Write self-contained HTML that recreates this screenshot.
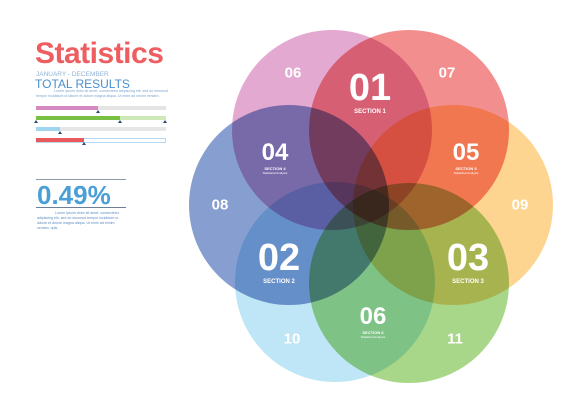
<!DOCTYPE html>
<html><head><style>
body{margin:0;width:588px;height:415px;background:#fff;position:relative;overflow:hidden;font-family:"Liberation Sans",sans-serif}
.c{position:absolute;width:200px;height:200px;border-radius:50%;mix-blend-mode:multiply}
.t{position:absolute;color:#fff;font-weight:bold;text-align:center;transform:translate(-50%,-50%);white-space:nowrap;line-height:1}
.s{font-size:6px;display:block;margin-top:2px}
.ss{font-size:3px;display:block;font-weight:normal;margin-top:1px}
.a{position:absolute}
.bar{position:absolute;height:4px;left:36px}
.tiny{position:absolute;font-size:3.6px;color:#7aa5cf;line-height:5px}
.tri{position:absolute;width:0;height:0;border-left:2px solid transparent;border-right:2px solid transparent;border-bottom:3px solid #2b4a6e}
</style></head><body>
<div class="c" style="left:232px;top:30px;background:#e3a9d0"></div>
<div class="c" style="left:309px;top:30px;background:#f28f8e"></div>
<div class="c" style="left:189px;top:105px;background:#879fd0"></div>
<div class="c" style="left:353px;top:105px;background:#fed590"></div>
<div class="c" style="left:235px;top:182px;background:#bfe6f6"></div>
<div class="c" style="left:309px;top:183px;background:#a8d78a"></div>

<div class="t" style="left:370px;top:92px;font-size:38px">01<span class="s">SECTION 1</span></div>
<div class="t" style="left:275px;top:158px;font-size:24px">04<span class="s" style="font-size:4px">SECTION 4</span><span class="ss">Statistical Analysis</span></div>
<div class="t" style="left:466px;top:158px;font-size:24px">05<span class="s" style="font-size:4px">SECTION 5</span><span class="ss">Statistical Analysis</span></div>
<div class="t" style="left:279px;top:262px;font-size:38px">02<span class="s">SECTION 2</span></div>
<div class="t" style="left:468px;top:262px;font-size:38px">03<span class="s">SECTION 3</span></div>
<div class="t" style="left:373px;top:322px;font-size:24px">06<span class="s" style="font-size:4px">SECTION 6</span><span class="ss">Statistical Analysis</span></div>
<div class="t" style="left:293px;top:73px;font-size:15px">06</div>
<div class="t" style="left:447px;top:73px;font-size:15px">07</div>
<div class="t" style="left:220px;top:205px;font-size:15px">08</div>
<div class="t" style="left:520px;top:205px;font-size:15px">09</div>
<div class="t" style="left:292px;top:339px;font-size:15px">10</div>
<div class="t" style="left:455px;top:339px;font-size:15px">11</div>

<div class="a" style="left:35px;top:39px;font-size:30px;font-weight:bold;color:#ee5d60;letter-spacing:-0.5px;line-height:1">Statistics</div>
<div class="a" style="left:36px;top:71px;font-size:6.5px;color:#8fb2d8">JANUARY - DECEMBER</div>
<div class="a" style="left:35px;top:77px;font-size:12px;color:#4a8fcf">TOTAL RESULTS</div>
<div class="tiny" style="left:36px;top:89px;width:134px;text-indent:18px">Lorem ipsum dolor sit amet, consectetur adipiscing elit, sed do eiusmod tempor incididunt ut labore et dolore magna aliqua. Ut enim ad minim veniam.</div>

<div class="bar" style="top:106px;width:130px;background:#e4e4e4"></div>
<div class="bar" style="top:106px;width:62px;background:#d48ac0"></div>
<div class="tri" style="left:96px;top:110px"></div>
<div class="bar" style="top:116px;width:130px;background:#cfe8b8"></div>
<div class="bar" style="top:116px;width:84px;background:#78c043"></div>
<div class="tri" style="left:34px;top:120px"></div><div class="tri" style="left:118px;top:120px"></div><div class="tri" style="left:163px;top:120px"></div>
<div class="bar" style="top:127px;width:130px;background:#e6e6e6"></div>
<div class="bar" style="top:127px;width:24px;background:#9fd6ef"></div>
<div class="tri" style="left:58px;top:131px"></div>
<div class="bar" style="top:138px;width:128px;border:0.5px solid #b7d8ee;height:3px;background:#fff"></div>
<div class="bar" style="top:138px;width:48px;background:#e9595c"></div>
<div class="tri" style="left:82px;top:142px"></div>

<div class="a" style="left:36px;top:179px;width:90px;height:1px;background:#8a9bb0"></div>
<div class="a" style="left:37px;top:182px;font-size:26px;font-weight:bold;color:#4a9fd6;line-height:1">0.49%</div>
<div class="a" style="left:36px;top:207px;width:90px;height:1px;background:#6d7f96"></div>
<div class="tiny" style="left:37px;top:211px;width:90px;text-indent:18px;color:#5b8ec4">Lorem ipsum dolor sit amet, consectetur adipiscing elit, sed do eiusmod tempor incididunt ut labore et dolore magna aliqua. Ut enim ad minim veniam, quis.</div>
</body></html>
